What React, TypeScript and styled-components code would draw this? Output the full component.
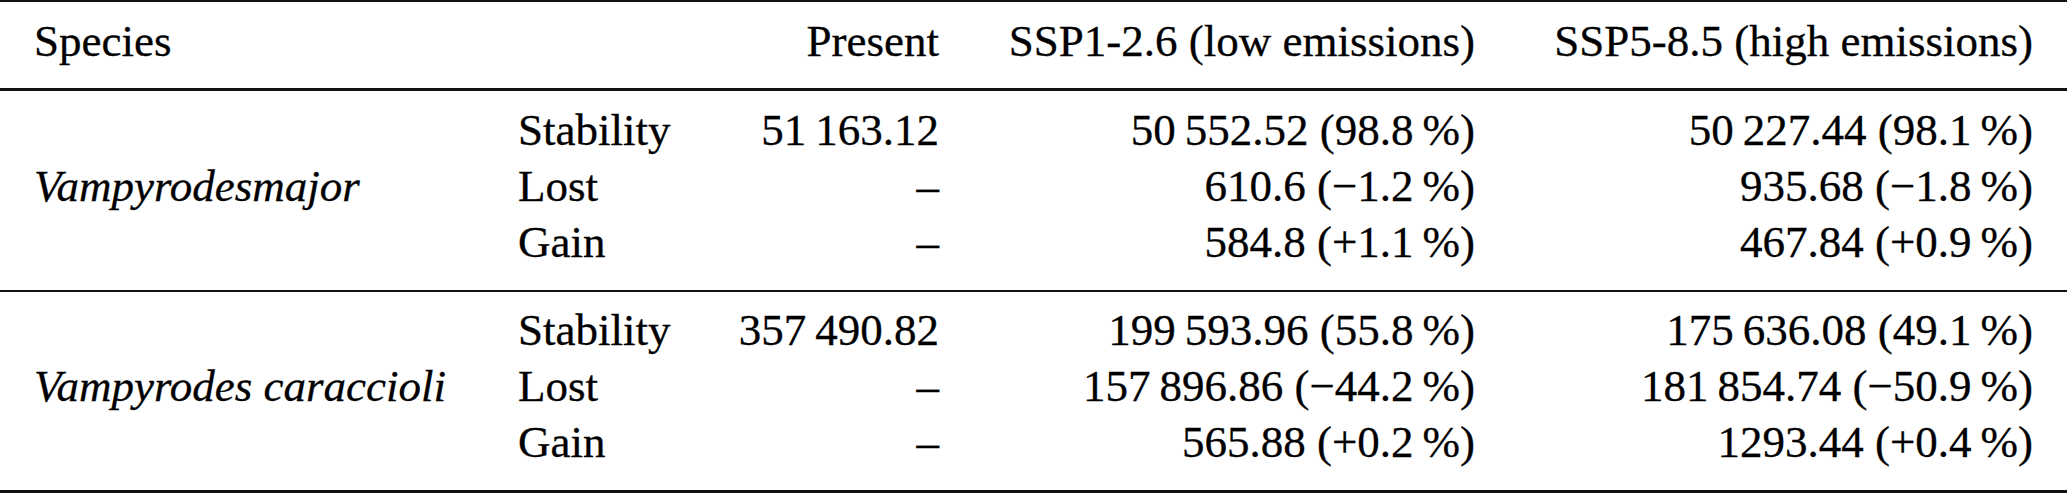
import React from 'react';
import styled, { createGlobalStyle } from 'styled-components';

const Global = createGlobalStyle`
  html, body { margin: 0; padding: 0; background: #fff; }
  body {
    font-family: "Liberation Serif", "Times New Roman", serif;
    color: #000;
  }
`;

const COLS = '484px 202px 219px 536px 558px';
const ROW = 56;

const Table = styled.div`
  width: 2067px;
  box-sizing: border-box;
  border-top: 2px solid #111;
  font-family: "Liberation Serif", "Times New Roman", serif;
  font-size: 45px;
  line-height: ${ROW}px;
  -webkit-text-stroke: 0.3px #000;
`;

const Section = styled.div<{ $top: number; $bottom: number; $rule: number }>`
  display: grid;
  grid-template-columns: ${COLS};
  grid-auto-rows: ${ROW}px;
  padding: ${(p) => p.$top}px 34px ${(p) => p.$bottom}px;
  border-bottom: ${(p) => p.$rule}px solid #111;
`;

const Cell = styled.div<{ $align?: 'left' | 'right'; $col: number }>`
  grid-column: ${(p) => p.$col};
  text-align: ${(p) => p.$align ?? 'left'};
  white-space: nowrap;
`;

const SpeciesName = styled.div`
  grid-column: 1;
  grid-row: 1 / span 3;
  align-self: center;
  font-style: italic;
  white-space: nowrap;
`;

type Row = { label: string; present: string; low: string; high: string };
type Group = { species: string; rows: Row[] };

const T = '\u2009';

const groups: Group[] = [
  {
    species: 'Vampyrodesmajor',
    rows: [
      { label: 'Stability', present: `51${T}163.12`, low: `50${T}552.52 (98.8${T}%)`, high: `50${T}227.44 (98.1${T}%)` },
      { label: 'Lost', present: '–', low: `610.6 (−1.2${T}%)`, high: `935.68 (−1.8${T}%)` },
      { label: 'Gain', present: '–', low: `584.8 (+1.1${T}%)`, high: `467.84 (+0.9${T}%)` },
    ],
  },
  {
    species: 'Vampyrodes caraccioli',
    rows: [
      { label: 'Stability', present: `357${T}490.82`, low: `199${T}593.96 (55.8${T}%)`, high: `175${T}636.08 (49.1${T}%)` },
      { label: 'Lost', present: '–', low: `157${T}896.86 (−44.2${T}%)`, high: `181${T}854.74 (−50.9${T}%)` },
      { label: 'Gain', present: '–', low: `565.88 (+0.2${T}%)`, high: `1293.44 (+0.4${T}%)` },
    ],
  },
];

const groupSpacing = [
  { top: 11.5, bottom: 19.5, rule: 2 },
  { top: 10, bottom: 20, rule: 3 },
];

export default function App() {
  return (
    <>
      <Global />
      <Table>
        <Section $top={10.8} $bottom={19.2} $rule={3}>
          <Cell $col={1}>Species</Cell>
          <Cell $col={3} $align="right">Present</Cell>
          <Cell $col={4} $align="right">SSP1-2.6 (low emissions)</Cell>
          <Cell $col={5} $align="right">SSP5-8.5 (high emissions)</Cell>
        </Section>
        {groups.map((g, gi) => (
          <Section
            key={g.species}
            $top={groupSpacing[gi].top}
            $bottom={groupSpacing[gi].bottom}
            $rule={groupSpacing[gi].rule}
          >
            <SpeciesName>{g.species}</SpeciesName>
            {g.rows.map((r) => (
              <React.Fragment key={r.label}>
                <Cell $col={2}>{r.label}</Cell>
                <Cell $col={3} $align="right">{r.present}</Cell>
                <Cell $col={4} $align="right">{r.low}</Cell>
                <Cell $col={5} $align="right">{r.high}</Cell>
              </React.Fragment>
            ))}
          </Section>
        ))}
      </Table>
    </>
  );
}
